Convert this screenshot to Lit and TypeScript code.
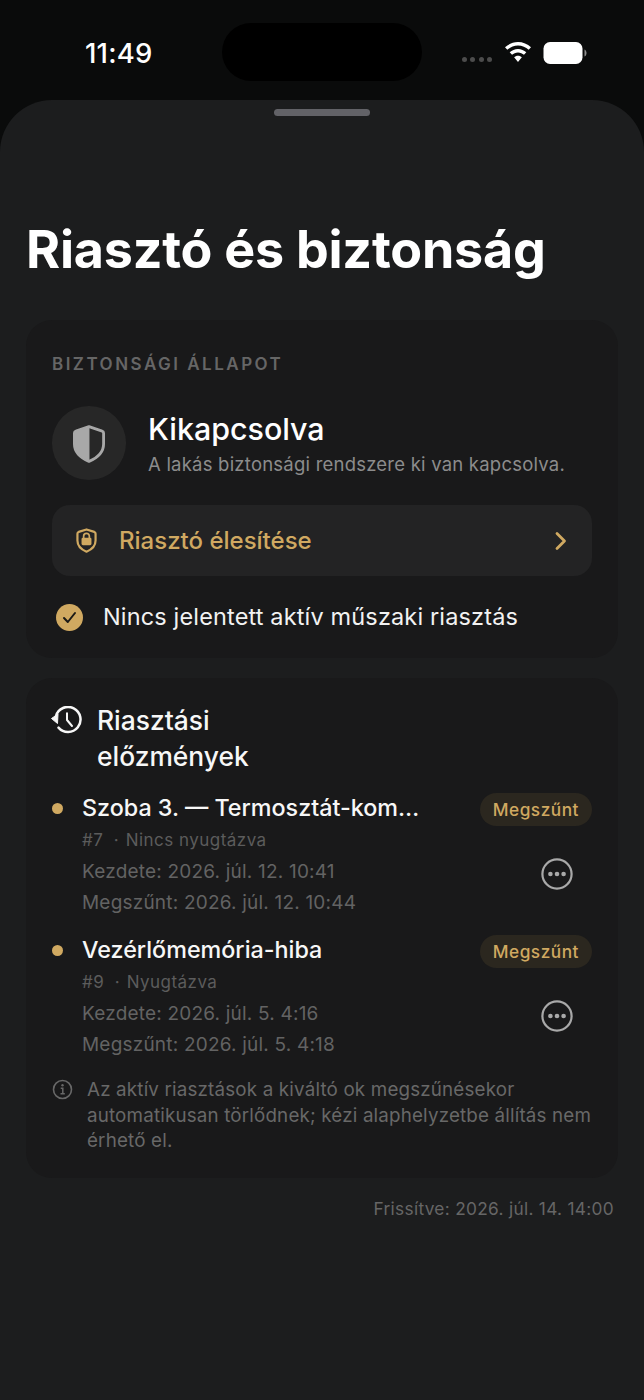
import { LitElement, html, css } from "lit";
import { customElement } from "lit/decorators.js";

const item = (title: string, id: string, ack: string, start: string, end: string) => html`
  <div class="item">
    <span class="dot"></span>
    <div class="item-main">
      <div class="item-title">${title}</div>
      <div class="meta">${id}  <span class="sep">·</span>${ack}</div>
      <div class="time">Kezdete: ${start}</div>
      <div class="time">Megszűnt: ${end}</div>
    </div>
    <div class="item-side">
      <span class="badge">Megszűnt</span>
      <svg class="more" width="32" height="32" viewBox="0 0 32 32" fill="none">
        <circle cx="16" cy="16" r="14.6" stroke="#a9a9a9" stroke-width="2.2"/>
        <circle cx="9.4" cy="16" r="2.3" fill="#a9a9a9"/>
        <circle cx="16" cy="16" r="2.3" fill="#a9a9a9"/>
        <circle cx="22.6" cy="16" r="2.3" fill="#a9a9a9"/>
      </svg>
    </div>
  </div>
`;

@customElement("app-root")
export class AppRoot extends LitElement {
  static styles = css`
    :host {
      display: block;
      width: 644px;
      height: 1400px;
      background: #0a0b0b;
      font-family: Inter, "Noto Sans", sans-serif;
      color: #fff;
      overflow: hidden;
    }
    .status {
      height: 100px;
      box-sizing: border-box;
      padding: 23px 0 0 85px;
      display: flex;
      align-items: flex-start;
    }
    .clock {
      flex: none;
      font-size: 27.5px;
      font-weight: 500;
      line-height: 60px;
      height: 60px;
      width: 137px;
      letter-spacing: 0.2px;
    }
    .island {
      flex: none;
      width: 200px;
      height: 58px;
      border-radius: 29px;
      background: #000;
    }
    .status-right {
      flex: none;
      margin-left: 40px;
      display: flex;
      align-items: center;
      height: 60px;
    }
    .cell { display: flex; gap: 3.4px; margin-right: 13px; margin-top: 12px; }
    .cell i { width: 5px; height: 5px; border-radius: 50%; background: #4c4c4c; display: block; }
    .wifi { margin-right: 12px; margin-top: -2px; }
    .batt { margin-top: -1px; }
    .sheet {
      height: 1300px;
      background: #1c1d1e;
      border-radius: 52px 52px 0 0;
      box-sizing: border-box;
      padding: 9px 26px 0;
    }
    .grab {
      width: 96px;
      height: 7px;
      border-radius: 4px;
      background: #626267;
      margin: 0 auto;
    }
    h1 {
      margin: 100px 0 0;
      font-size: 52px;
      line-height: 68px;
      font-weight: 700;
      letter-spacing: -0.23px;
      white-space: nowrap;
    }
    .card {
      background: #19191a;
      border-radius: 26px;
      padding: 0 26px;
    }
    .c1 { margin-top: 36px; height: 338px; box-sizing: border-box; padding-top: 34px; }
    .label {
      font-size: 17px;
      line-height: 20px;
      font-weight: 600;
      letter-spacing: 2.48px;
      color: #666;
    }
    .state { display: flex; align-items: center; gap: 22.5px; margin-top: 32px; height: 74px; }
    .shield-wrap {
      width: 73.5px;
      height: 73.5px;
      border-radius: 50%;
      background: #272727;
      display: flex;
      align-items: center;
      justify-content: center;
      flex: none;
    }
    .shield-wrap svg { margin-top: 1px; }
    .state-text { padding-top: 1px; }
    .state-title { font-size: 30.4px; line-height: 36px; font-weight: 500; }
    .state-sub { font-size: 18.5px; line-height: 24px; color: #8c8c8c; margin-top: 5px; letter-spacing: 0.22px; white-space: nowrap; }
    .arm {
      margin-top: 25px;
      height: 71px;
      background: #232324;
      border-radius: 18px;
      display: flex;
      align-items: center;
      padding: 0 24px 0 24px;
    }
    .arm-text {
      flex: 1;
      margin-left: 22px;
      font-size: 24px;
      font-weight: 500;
      color: #d0a961;
    }
    .ok { display: flex; align-items: center; margin-top: 21px; padding-left: 4px; }
    .ok-text { margin-left: 20px; font-size: 23.5px; line-height: 40px; font-weight: 400; color: #f2f2f2; white-space: nowrap; letter-spacing: 0.15px; }
    .c2 { margin-top: 20px; height: 500px; box-sizing: border-box; padding-top: 24px; }
    .hist { display: flex; align-items: flex-start; }
    .hist svg { flex: none; margin: 4px 0 0 -2px; }
    .hist-title { margin-left: 14px; font-size: 26.4px; line-height: 36px; font-weight: 450; width: 240px; color: #f7f7f7; }
    .list { margin-top: 16px; }
    .item { display: flex; align-items: flex-start; height: 142px; }
    .dot { width: 11px; height: 11px; border-radius: 50%; background: #d0a961; flex: none; margin-top: 13px; }
    .item-main { flex: 1; margin-left: 19px; min-width: 0; }
    .item-title {
      font-size: 23.3px;
      line-height: 36px;
      font-weight: 450;
      color: #f7f7f7;
      white-space: nowrap;
    }
    .meta { font-size: 17px; line-height: 24px; color: #5c5c5c; margin-top: 2px; letter-spacing: 0.47px; white-space: pre; }
    .sep { margin: 0 6.5px 0 0; }
    .time { font-size: 19px; line-height: 31px; color: #636363; letter-spacing: 0.2px; white-space: nowrap; }
    .meta + .time { margin-top: 4px; }
    .item-side { display: flex; flex-direction: column; align-items: flex-end; flex: none; margin-top: 3px; }
    .badge {
      height: 33px;
      line-height: 34px;
      padding: 0 13px;
      border-radius: 17px;
      background: #2b271f;
      color: #d0a961;
      font-size: 17.3px;
      font-weight: 500;
      letter-spacing: 0.5px;
    }
    .more { margin: 32px 19px 0 0; }
    .note { display: flex; align-items: flex-start; margin-top: 3px; }
    .note svg { flex: none; margin-top: 2px; }
    .note-text { margin-left: 14px; font-size: 18.8px; line-height: 25.6px; color: #686868; letter-spacing: 0.17px; }
    .updated { margin-top: 20px; text-align: right; font-size: 17.3px; line-height: 22px; color: #666; padding-right: 4px; letter-spacing: 0.3px; }
  `;

  render() {
    return html`
      <div class="status">
        <div class="clock">11:49</div>
        <div class="island"></div>
        <div class="status-right">
          <div class="cell"><i></i><i></i><i></i><i></i></div>
          <svg class="wifi" width="26" height="20" viewBox="1.900 0.600 22.200 16.900" fill="#fff">
            <path d="M13 3.600c3.500 0 6.700 1.400 9.100 3.600l2-2.100C21.100 2.300 17.200.6 13 .6S4.900 2.300 1.900 5.100l2 2.100C6.300 5 9.500 3.600 13 3.600z"/>
            <path d="M13 9.400c2 0 3.800.8 5.100 2l2-2.100C18.200 7.500 15.700 6.400 13 6.400S7.800 7.500 5.900 9.300l2 2.100c1.300-1.200 3.100-2 5.100-2z"/>
            <path d="M13 12.300c-1.300 0-2.500.5-3.300 1.300L13 17.500l3.300-3.900c-.8-.8-2-1.300-3.300-1.300z"/>
          </svg>
          <svg class="batt" width="44" height="22" viewBox="0 0 44 22">
            <rect x="0.500" y="0" width="39" height="22" rx="6.500" fill="#fff"/>
            <path d="M41.500 7.500c1.300.5 2 2 2 3.500s-.7 3-2 3.500z" fill="#8f8f8f"/>
          </svg>
        </div>
      </div>
      <div class="sheet">
        <div class="grab"></div>
        <h1>Riasztó és biztonság</h1>
        <section class="card c1">
          <div class="label">BIZTONSÁGI ÁLLAPOT</div>
          <div class="state">
            <div class="shield-wrap">
              <svg width="32" height="38" viewBox="0 0 34 40" fill="none">
                <path d="M17 1.500 31 6.300c1 .3 1.500 1 1.500 2V20c0 8.800-6.800 14.800-15.500 18.500C8.300 34.800 1.500 28.800 1.500 20V8.300c0-1 .5-1.700 1.500-2z" stroke="#a8a8a8" stroke-width="3" stroke-linejoin="round"/>
                <path d="M17 1.500 3 6.300c-1 .3-1.500 1-1.500 2V20c0 8.800 6.800 14.800 15.500 18.500z" fill="#a8a8a8" stroke="#a8a8a8" stroke-width="1"/>
              </svg>
            </div>
            <div class="state-text">
              <div class="state-title">Kikapcsolva</div>
              <div class="state-sub">A lakás biztonsági rendszere ki van kapcsolva.</div>
            </div>
          </div>
          <div class="arm">
            <svg width="21" height="25" viewBox="0 0 22 26" fill="none">
              <path d="M11 1.400 19.200 4c.8.300 1.300.9 1.300 1.800V13c0 5.600-4 9.500-9.500 11.700C5.500 22.500 1.500 18.600 1.500 13V5.800c0-.9.500-1.500 1.300-1.800z" stroke="#d0a961" stroke-width="2.300" stroke-linejoin="round"/>
              <rect x="5.800" y="10" width="10.400" height="8" rx="1.500" fill="#d0a961"/>
              <path d="M8 10.500V8.500a3 3 0 0 1 6 0v2" stroke="#d0a961" stroke-width="1.800"/>
            </svg>
            <div class="arm-text">Riasztó élesítése</div>
            <svg width="14" height="20" viewBox="0 0 14 20" fill="none">
              <path d="M3 2.500 10.500 10 3 17.500" stroke="#d0a961" stroke-width="2.800" stroke-linecap="round" stroke-linejoin="round"/>
            </svg>
          </div>
          <div class="ok">
            <svg width="27" height="27" viewBox="0 0 27 27" fill="none">
              <circle cx="13.500" cy="13.500" r="13.500" fill="#d0a961"/>
              <path d="M8 14l3.800 4 7.200-9" stroke="#1b1a17" stroke-width="2" stroke-linecap="round" stroke-linejoin="round"/>
            </svg>
            <div class="ok-text">Nincs jelentett aktív műszaki riasztás</div>
          </div>
        </section>
        <section class="card c2">
          <div class="hist">
            <svg width="33" height="30" viewBox="0 0 33 30" fill="none">
              <path d="M6 10A12.500 12.500 0 1 1 8.500 21.600" stroke="#f7f7f7" stroke-width="2.500" stroke-linecap="round"/>
              <path d="M1.500 12.500 8 8 7.500 17.500z" fill="#f7f7f7" stroke="#f7f7f7" stroke-width="1" stroke-linejoin="round"/>
              <path d="M17 7.300V14l5 6" stroke="#f7f7f7" stroke-width="2" stroke-linecap="round" stroke-linejoin="round"/>
            </svg>
            <div class="hist-title">Riasztási előzmények</div>
          </div>
          <div class="list">
            ${item("Szoba 3. — Termosztát-kom…", "#7", "Nincs nyugtázva", "2026. júl. 12. 10:41", "2026. júl. 12. 10:44")}
            ${item("Vezérlőmemória-hiba", "#9", "Nyugtázva", "2026. júl. 5. 4:16", "2026. júl. 5. 4:18")}
          </div>
          <div class="note">
            <svg width="21" height="21" viewBox="0 0 21 21" fill="none">
              <circle cx="10.500" cy="10.500" r="9" stroke="#686868" stroke-width="1.600"/>
              <circle cx="10.500" cy="6.300" r="1.200" fill="#686868"/>
              <path d="M8.700 9.300h2.100v5.200M8.500 14.700h4.300" stroke="#686868" stroke-width="1.500"/>
            </svg>
            <div class="note-text">Az aktív riasztások a kiváltó ok megszűnésekor automatikusan törlődnek; kézi alaphelyzetbe állítás nem érhető el.</div>
          </div>
        </section>
        <div class="updated">Frissítve: 2026. júl. 14. 14:00</div>
      </div>
    `;
  }
}
